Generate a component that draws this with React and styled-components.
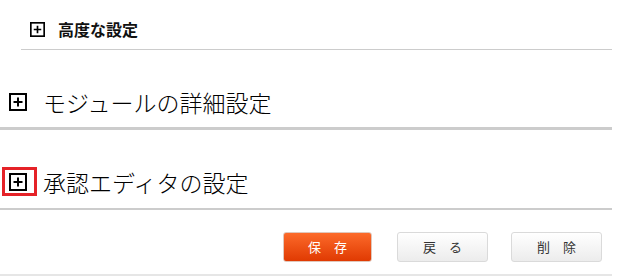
import React from "react";
import styled, { createGlobalStyle, css } from "styled-components";

const GlobalStyle = createGlobalStyle`
  html, body {
    margin: 0;
    padding: 0;
    background: #ffffff;
  }
  body {
    font-family: "Noto Sans CJK JP", "Noto Sans", sans-serif;
    color: #111111;
  }
`;

const Page = styled.div`
  width: 612px;
`;

const SubSection = styled.div`
  margin-left: 21px;
  padding: 20px 0 10px 9px;
  border-bottom: 1px solid #cccccc;
`;

const SubHeading = styled.div`
  display: flex;
  align-items: center;
  gap: 13px;
  height: 19px;
  font-size: 16px;
  font-weight: 700;
  line-height: 19px;
`;

const Section = styled.div`
  padding: 37px 0 ${({ $padBottom }) => $padBottom}px 9px;
  border-bottom: ${({ $line }) => $line}px solid #cccccc;
`;

const Heading = styled.div`
  display: flex;
  align-items: center;
  gap: 16px;
  height: 30px;
  font-size: 23px;
  font-weight: 300;
  line-height: 30px;
  color: #000000;
`;

const IconWrap = styled.span`
  position: relative;
  display: inline-flex;

  ${({ $marked }) =>
    $marked &&
    css`
      &::after {
        content: "";
        position: absolute;
        left: -7px;
        right: -10px;
        top: -6px;
        bottom: -5px;
        border: 3px solid #e52228;
      }
    `}
`;

const ButtonBar = styled.div`
  display: flex;
  justify-content: flex-end;
  gap: 23px;
  padding: 22px 10px 12px 0;
  border-bottom: 2px solid #e6e6e6;
`;

const Button = styled.button`
  width: 91px;
  height: 30px;
  padding: 0;
  border-radius: 3px;
  font-family: "Noto Sans CJK JP", sans-serif;
  font-size: 13px;
  line-height: 28px;
  cursor: pointer;
  border: 1px solid #dadada;
  background: linear-gradient(#ffffff, #ececec);
  color: #333333;

  ${({ $primary }) =>
    $primary &&
    css`
      width: 89px;
      margin-right: 2px;
      border-color: #e0c7bb;
      background: linear-gradient(#fc6a2a, #e03a02);
      color: #ffffff;
    `}
`;

function PlusBox({ size }) {
  return (
    <svg width={size} height={size} viewBox="0 0 18 18" fill="none">
      <rect x="1" y="1" width="16" height="16" stroke="#000" strokeWidth="2" />
      <path d="M4.5 9H13.5M9 4.5V13.5" stroke="#000" strokeWidth="2" />
    </svg>
  );
}

export default function App() {
  return (
    <Page>
      <GlobalStyle />

      <SubSection>
        <SubHeading>
          <IconWrap>
            <PlusBox size={15} />
          </IconWrap>
          <span>高度な設定</span>
        </SubHeading>
      </SubSection>

      <Section $padBottom={10} $line={3}>
        <Heading>
          <IconWrap>
            <PlusBox size={18} />
          </IconWrap>
          <span>モジュールの詳細設定</span>
        </Heading>
      </Section>

      <Section $padBottom={11} $line={2}>
        <Heading>
          <IconWrap $marked>
            <PlusBox size={18} />
          </IconWrap>
          <span>承認エディタの設定</span>
        </Heading>
      </Section>

      <ButtonBar>
        <Button $primary>保　存</Button>
        <Button>戻　る</Button>
        <Button>削　除</Button>
      </ButtonBar>
    </Page>
  );
}
